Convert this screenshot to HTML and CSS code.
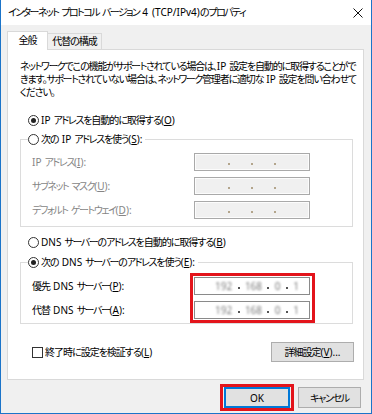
FILE: index.html
```html
<!DOCTYPE html>
<html lang="ja">
<head>
<meta charset="utf-8">
<link rel="stylesheet" href="styles.css">
</head>
<body>
<div class="window">
  <div class="titlebar">
    <span class="title"><span class="k">インターネット</span> <span class="k">プロトコル</span> <span class="k">バージョン</span> <span class="l">4 (TCP/IPv4)</span>の<span class="k">プロパティ</span></span>
    <svg class="close" width="10" height="10" viewBox="0 0 10 10"><path d="M0.5 0.5L9.5 9.5M9.5 0.5L0.5 9.5" stroke="#111" stroke-width="1"/></svg>
  </div>
  <div class="body">
    <div class="tabs">
      <div class="tab active">全般</div>
      <div class="tab">代替の構成</div>
    </div>
    <div class="panel">
      <p class="desc"><span class="k">ネットワーク</span>でこの機能が<span class="k">サポート</span>されている場合は、<span class="l">IP</span> 設定を自動的に取得することがで<br>きます。<span class="k">サポート</span>されていない場合は、<span class="k">ネットワーク</span>管理者に適切な <span class="l">IP</span> 設定を問い合わせて<br>ください。</p>

      <div class="opt first"><span class="radio on"></span><span><span class="l">IP</span> <span class="k">アドレス</span>を自動的に取得する<span class="l">(<u>O</u>)</span></span></div>

      <fieldset class="group g1">
        <legend class="opt"><span class="radio"></span><span>次の <span class="l">IP</span> <span class="k">アドレス</span>を使う<span class="l">(<u>S</u>):</span></span></legend>
        <div class="grid">
          <span class="lbl dis"><span class="l">IP</span> <span class="k">アドレス</span><span class="l">(<u>I</u>):</span></span>
          <span class="ipf dis"><i></i><i></i><i></i></span>
          <span class="lbl dis"><span class="k">サブネット</span> <span class="k">マスク</span><span class="l">(<u>U</u>):</span></span>
          <span class="ipf dis"><i></i><i></i><i></i></span>
          <span class="lbl dis"><span class="k">デフォルト</span> <span class="k">ゲートウェイ</span><span class="l">(<u>D</u>):</span></span>
          <span class="ipf dis"><i></i><i></i><i></i></span>
        </div>
      </fieldset>

      <div class="opt dns-auto"><span class="radio"></span><span><span class="l">DNS</span> <span class="k">サーバー</span>の<span class="k">アドレス</span>を自動的に取得する<span class="l">(<u>B</u>)</span></span></div>

      <fieldset class="group g2">
        <legend class="opt"><span class="radio on"></span><span>次の <span class="l">DNS</span> <span class="k">サーバー</span>の<span class="k">アドレス</span>を使う<span class="l">(<u>E</u>):</span></span></legend>
        <div class="dnsrow">
          <div class="dnslabels">
            <span class="lbl">優先 <span class="l">DNS</span> <span class="k">サーバー</span><span class="l">(<u>P</u>):</span></span>
            <span class="lbl">代替 <span class="l">DNS</span> <span class="k">サーバー</span><span class="l">(<u>A</u>):</span></span>
          </div>
          <div class="hl">
            <span class="ipf en"><b>192</b><i></i><b>168</b><i></i><b>0</b><i></i><b>1</b></span>
            <span class="ipf en"><b>192</b><i></i><b>168</b><i></i><b>0</b><i></i><b>1</b></span>
          </div>
        </div>
      </fieldset>

      <div class="checkrow">
        <div class="opt"><span class="check"></span><span>終了時に設定を検証する<span class="l">(<u>L</u>)</span></span></div>
        <button class="btn adv">詳細設定<span class="l">(<u>V</u>)...</span></button>
      </div>
    </div>
    <div class="footer">
      <div class="hl okwrap"><button class="btn ok"><span class="l">OK</span></button></div>
      <button class="btn cancel"><span class="k">キャンセル</span></button>
    </div>
  </div>
</div>
</body>
</html>
```

FILE: styles.css
```css
* { box-sizing: border-box; }
html, body { margin: 0; padding: 0; }
body {
  width: 372px;
  height: 414px;
  overflow: hidden;
  font-family: "Noto Sans", "Noto Sans CJK JP", sans-serif;
  font-size: 10px;
  letter-spacing: -1px;
  word-spacing: 1.5px;
  font-feature-settings: "palt";
  color: #000;
  background: #f0f0f0;
}
.l { letter-spacing: 0; }
.k { letter-spacing: -1.4px; }
.window {
  width: 372px;
  height: 414px;
  border: 1px solid #1b74c9;
  border-top: none;
  background: #f0f0f0;
  display: flex;
  flex-direction: column;
}
.titlebar {
  height: 25px;
  flex: none;
  background: #fff;
  display: flex;
  align-items: center;
  justify-content: space-between;
  padding: 0 8px 0 7px;
}
.title { line-height: 13px; white-space: nowrap; }
.title .k { letter-spacing: -1.6px; }
.close { display: block; margin-top: 1px; }
.body {
  width: 370px;
  padding: 6px 7px 0 6px;
  display: flex;
  flex-direction: column;
}
.tabs {
  display: flex;
  align-items: flex-end;
  height: 18px;
  position: relative;
  z-index: 1;
}
.tab {
  height: 16px;
  border: 1px solid #d9d9d9;
  border-bottom: none;
  background: #f0f0f0;
  line-height: 15px;
  width: 55px;
  text-align: center;
  white-space: nowrap;
  margin-left: -1px;
}
.tab.active {
  height: 19px;
  width: 41px;
  margin-left: 0;
  margin-bottom: -1px;
  background: #fff;
  line-height: 17px;
}
.panel {
  width: 357px;
  height: 331px;
  background: #fff;
  border: 1px solid #d9d9d9;
  padding: 10px 9px 0 12px;
  display: flex;
  flex-direction: column;
}
.desc {
  margin: 0;
  line-height: 13px;
  white-space: nowrap;
  letter-spacing: -1.15px;
}
.desc .l { letter-spacing: 0; }
.desc .k { letter-spacing: -1.4px; }
.opt {
  display: flex;
  align-items: center;
  line-height: 13px;
  white-space: nowrap;
}
.opt.first { margin: 15px 0 0 8px; }
.radio {
  width: 11px;
  height: 11px;
  border: 1px solid #333;
  border-radius: 50%;
  background: #fff;
  margin-right: 2px;
  display: flex;
  align-items: center;
  justify-content: center;
  flex: none;
}
.radio.on::after {
  content: "";
  width: 5px;
  height: 5px;
  border-radius: 50%;
  background: #222;
}
.check {
  width: 11px;
  height: 11px;
  border: 1px solid #333;
  background: #fff;
  margin-right: 2px;
  flex: none;
}
.group {
  margin: 6px 0 0 0;
  padding: 0 0 7px 11px;
  border: 1px solid #dcdcdc;
  width: 333px;
  min-width: 0;
}
.group legend {
  padding: 0 3px 0 0;
  margin-left: -4px;
}
.grid {
  display: grid;
  grid-template-columns: 162px 116px;
  grid-auto-rows: 18px;
  row-gap: 6px;
  margin-top: 7px;
  align-items: center;
}
.lbl { line-height: 13px; white-space: nowrap; }
.dis { color: #858585; }
.ipf {
  height: 18px;
  width: 116px;
  display: flex;
  align-items: center;
  justify-content: space-around;
  padding: 0 22px;
}
.ipf.dis {
  background: #f0f0f0;
  border: 1px solid #a9a9a9;
  box-shadow: inset 0 0 0 1px #fcfcfc;
}
.ipf i {
  width: 2px;
  height: 2px;
  background: #b3a58c;
  margin-top: 3px;
}
.ipf.en {
  background: #fff;
  border: 1px solid #8a8a8a;
  justify-content: space-between;
  padding: 0 10px 0 20px;
}
.ipf.en i { background: #555; }
.ipf.en b {
  font-weight: normal;
  letter-spacing: 0;
  color: #7a7a7a;
  filter: blur(1px);
}
.dns-auto { margin: 9px 0 0 8px; }
.g2 { margin-top: 7px; padding-bottom: 0; }
.dnsrow {
  display: flex;
  margin-top: 4px;
}
.dnslabels {
  width: 158px;
  display: flex;
  flex-direction: column;
  gap: 6px;
  padding-top: 4px;
}
.dnslabels .lbl { height: 18px; line-height: 18px; }
.hl {
  border: 3px solid #e3141b;
  padding: 1px 2px 1px 1px;
  display: flex;
  flex-direction: column;
  gap: 6px;
}
.checkrow {
  display: flex;
  align-items: center;
  justify-content: space-between;
  margin-top: 18px;
  padding-left: 12px;
}
.btn {
  font: inherit;
  letter-spacing: -1px;
  word-spacing: 1.5px;
  font-feature-settings: "palt";
  color: #000;
  background: #e1e1e1;
  border: 1px solid #adadad;
  border-radius: 0;
  padding: 0;
  margin: 0;
  height: 20px;
  line-height: 18px;
}
.btn .k { letter-spacing: -1.3px; }
.adv { width: 83px; }
.footer {
  display: flex;
  justify-content: flex-end;
  align-items: center;
  margin-top: 4px;
  padding-right: 3px;
  gap: 4px;
}
.okwrap {
  padding: 0 1px;
  height: 27px;
  justify-content: center;
}
.ok {
  width: 66px;
  height: 21px;
  border: 1px solid #0078d7;
  box-shadow: inset 0 0 0 1px #0078d7;
}
.cancel { width: 63px; height: 21px; }
```
